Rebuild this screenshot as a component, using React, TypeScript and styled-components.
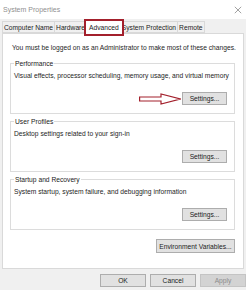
import React, { FunctionComponent } from 'react'
import styled, { createGlobalStyle } from 'styled-components'

const Global = createGlobalStyle`
    html, body {
        margin: 0;
        padding: 0;
    }
    body {
        background: #f0f0f0;
        font-family: "Liberation Sans", Arial, sans-serif;
    }
`

interface TabProps {
    active?: boolean
}

interface ButtonProps {
    w: number
    h?: number
    disabled?: boolean
}

const S = {
    Window: styled.div`
        width: 246px;
        height: 290px;
        display: flex;
        flex-direction: column;
        overflow: hidden;
        background: #f0f0f0;
        font-size: 6.7px;
        color: #1e1e1e;
    `,
    TitleBar: styled.div`
        height: 19px;
        flex: none;
        background: #fff;
        display: flex;
        align-items: center;
        justify-content: space-between;
        padding: 0 4px 0 3px;
    `,
    Title: styled.span`
        font-size: 7px;
        color: #909090;
    `,
    Tabs: styled.div`
        height: 14px;
        flex: none;
        display: flex;
        align-items: flex-end;
        padding-left: 2px;
        position: relative;
        z-index: 1;
    `,
    Tab: styled.div<TabProps>`
        position: relative;
        height: ${p => (p.active ? 15 : 12)}px;
        margin: ${p => (p.active ? '0 -2px -1px' : '0')};
        padding: 0 ${p => (p.active ? 3 : 1)}px;
        z-index: ${p => (p.active ? 2 : 0)};
        box-sizing: border-box;
        display: flex;
        align-items: center;
        background: ${p => (p.active ? '#fff' : '#f0f0f0')};
        border: 1px solid #d9d9d9;
        border-bottom: ${p => (p.active ? 'none' : '1px solid #d9d9d9')};
        margin-left: ${p => (p.active ? '-2px' : '-1px')};
        color: #222;
        white-space: nowrap;
        &:first-child {
            margin-left: 0;
        }
        ${p => p.active && `
            &::after {
                content: '';
                position: absolute;
                left: -2px;
                right: -2px;
                top: -1px;
                bottom: -2px;
                border: 2px solid #a3202c;
            }
        `}
    `,
    Panel: styled.div`
        flex: none;
        margin: 0 2px;
        background: #fff;
        border: 1px solid #d9d9d9;
        padding: 9px 8px 15px 7px;
        display: flex;
        flex-direction: column;
    `,
    Intro: styled.div`
        line-height: 9px;
        margin-left: 2px;
        white-space: nowrap;
    `,
    Group: styled.fieldset`
        margin: 3px 0 0;
        padding: 0 7px 8px 2px;
        border: 1px solid #dcdcdc;
        min-width: 0;
        &:first-of-type {
            margin-top: 7px;
        }
    `,
    Legend: styled.legend`
        padding: 0 1px;
        margin-left: 1px;
        line-height: 9px;
        color: #222;
    `,
    Desc: styled.div`
        margin-top: 3px;
        margin-left: 1px;
        line-height: 9px;
        white-space: nowrap;
    `,
    ButtonRow: styled.div`
        display: flex;
        justify-content: flex-end;
        align-items: center;
        gap: 1px;
        margin-top: 12px;
    `,
    Button: styled.div<ButtonProps>`
        width: ${p => p.w}px;
        height: ${p => p.h ?? 13}px;
        box-sizing: border-box;
        display: flex;
        align-items: center;
        justify-content: center;
        background: ${p => (p.disabled ? '#d3d3d3' : '#e1e1e1')};
        border: 1px solid ${p => (p.disabled ? '#c4c4c4' : '#adadad')};
        color: ${p => (p.disabled ? '#8c8c8c' : '#222')};
        white-space: nowrap;
    `,
    EnvRow: styled.div`
        display: flex;
        justify-content: flex-end;
        margin-top: 9px;
    `,
    Footer: styled.div`
        display: flex;
        justify-content: flex-end;
        gap: 4px;
        margin-top: 5px;
    `
}

const CloseIcon = () => (
    <svg width="8" height="8" viewBox="0 0 8 8">
        <path d="M0.8 0.8 L7.2 7.2 M7.2 0.8 L0.8 7.2" stroke="#8a8a8a" strokeWidth="0.8" fill="none" />
    </svg>
)

const Arrow = () => (
    <svg width="42" height="12" viewBox="0 0 42 12">
        <path
            d="M0.6 4 H22 V1 L41.3 6 L22 11 V8 H0.6 Z"
            fill="#fff"
            stroke="#a3202c"
            strokeWidth="1.2"
            strokeLinejoin="miter"
        />
    </svg>
)

interface GroupProps {
    title: string
    text: string
    arrow?: boolean
}

const SettingsGroup: FunctionComponent<GroupProps> = ({ title, text, arrow }) => (
    <S.Group>
        <S.Legend>{title}</S.Legend>
        <S.Desc>{text}</S.Desc>
        <S.ButtonRow>
            {arrow && <Arrow />}
            <S.Button w={45}>Settings...</S.Button>
        </S.ButtonRow>
    </S.Group>
)

const tabs = ['Computer Name', 'Hardware', 'Advanced', 'System Protection', 'Remote']

const App = () => {
    return <S.Window>
        <Global />
        <S.TitleBar>
            <S.Title>System Properties</S.Title>
            <CloseIcon />
        </S.TitleBar>
        <S.Tabs>
            {tabs.map(t => (
                <S.Tab key={t} active={t === 'Advanced'}>{t}</S.Tab>
            ))}
        </S.Tabs>
        <S.Panel>
            <S.Intro>You must be logged on as an Administrator to make most of these changes.</S.Intro>
            <SettingsGroup
                title="Performance"
                text="Visual effects, processor scheduling, memory usage, and virtual memory"
                arrow
            />
            <SettingsGroup title="User Profiles" text="Desktop settings related to your sign-in" />
            <SettingsGroup
                title="Startup and Recovery"
                text="System startup, system failure, and debugging information"
            />
            <S.EnvRow>
                <S.Button w={79} h={14}>Environment Variables...</S.Button>
            </S.EnvRow>
        </S.Panel>
        <S.Footer>
            <S.Button w={46}>OK</S.Button>
            <S.Button w={46}>Cancel</S.Button>
            <S.Button w={46} disabled>Apply</S.Button>
        </S.Footer>
    </S.Window>
}

export default App
